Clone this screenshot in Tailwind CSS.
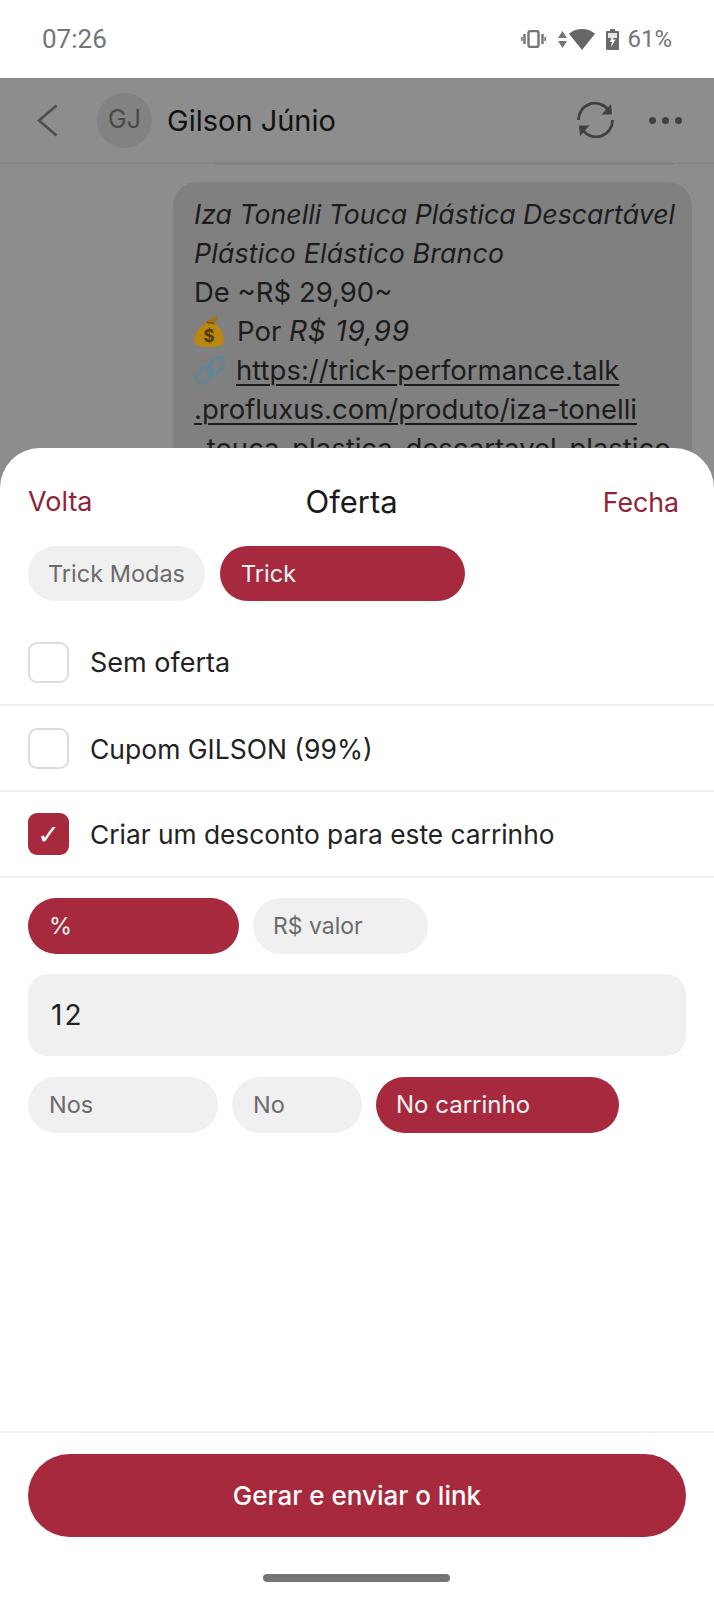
<!DOCTYPE html>
<html lang="en">
<head>
  <meta charset="UTF-8" />
  <meta name="viewport" content="width=device-width, initial-scale=1.0"/>
  <title>Oferta</title>
  <script src="https://cdn.jsdelivr.net/npm/@tailwindcss/browser@4"></script>
</head>
<body class="bg-white [font-family:Inter,sans-serif]">
  <div class="relative w-[714px] h-[1599px] overflow-hidden flex flex-col">

    <!-- Status bar -->
    <div class="h-[78px] shrink-0 bg-white flex items-start justify-between pl-[42px] pr-[42px] pt-[24px] text-[#757575] text-[24px] leading-[30px] [font-family:Roboto,sans-serif]">
      <span class="text-[26px]">07:26</span>
      <div class="flex items-center h-[30px]">
        <svg class="w-[25px] h-[18px] mr-[12px]" viewBox="0 0 25 18" fill="none" stroke="#757575">
          <rect x="7.5" y="1" width="10" height="16" rx="2" stroke-width="2.4"/>
          <path d="M3.5 4v10M21.5 4v10" stroke-width="2.4"/>
          <path d="M.8 7v4M24.2 7v4" stroke-width="1.6"/>
        </svg>
        <svg class="w-[9px] h-[17px] mr-[2px]" viewBox="0 0 9 17" fill="#757575">
          <path d="M4.5 0L9 7H0zM0 10h9l-4.500 7z"/>
        </svg>
        <svg class="w-[26px] h-[21px] mr-[11px]" viewBox="0 0 26 21" fill="#666666">
          <path d="M13 0C8 0 3.500 1.800 0 4.800L13 21 26 4.800C22.500 1.800 18 0 13 0z"/>
        </svg>
        <svg class="w-[13px] h-[21px] mr-[8px]" viewBox="0 0 13 21">
          <path d="M4 0h5v2h3a1 1 0 0 1 1 1v17a1 1 0 0 1-1 1H1a1 1 0 0 1-1-1V3a1 1 0 0 1 1-1h3z" fill="#6b6b6b"/>
          <path d="M2 4h9v15H2z" fill="#e4e4e4"/>
          <path d="M2 9h9v10H2z" fill="#6b6b6b"/>
          <path d="M7.500 6L3.500 13h2.500L5 18l4.500-7.500H7z" fill="#ffffff"/>
        </svg>
        <span>61%</span>
      </div>
    </div>

    <!-- Chat behind the sheet, dimmed -->
    <div class="flex-1 bg-[#8d8d8d] flex flex-col">
      <div class="relative h-[86px] shrink-0 border-b-2 border-[#858585] flex items-center pl-[37px] pr-[32px]">
        <svg class="w-[21px] h-[33px] mr-[39px]" viewBox="0 0 21 33" fill="none" stroke="#4d4d4d" stroke-width="2.600">
          <path d="M19.500 1.500L2 16.500l17.500 15"/>
        </svg>
        <div class="w-[55px] h-[55px] rounded-full bg-[#828282] flex items-center justify-center text-[#4a4a4a] text-[25px] mr-[15px]">GJ</div>
        <span class="text-[29px] leading-[34px] text-[#111111] mt-[2px]">Gilson Júnio</span>
        <svg class="w-[37px] h-[36px] ml-auto mr-[35px]" viewBox="0 0 37 36" fill="none" stroke="#404040" stroke-width="2.800">
          <path d="M1.500 18A16.500 16.500 0 0 1 31 7.500"/>
          <path d="M35.500 18A16.500 16.500 0 0 1 6 28.500"/>
          <path d="M34 2l1 10.500H24.500z" fill="#404040" stroke="none"/>
          <path d="M3 34L2 23.500h10.500z" fill="#404040" stroke="none"/>
        </svg>
        <div class="flex gap-[6px]">
          <span class="w-[7px] h-[7px] rounded-full bg-[#404040]"></span>
          <span class="w-[7px] h-[7px] rounded-full bg-[#404040]"></span>
          <span class="w-[7px] h-[7px] rounded-full bg-[#404040]"></span>
        </div>
        <div class="absolute left-[215px] right-[40px] bottom-[-3px] h-[2px] bg-[#808080]"></div>
      </div>

      <div class="flex justify-end pr-[22px] pt-[18px]">
        <div class="w-[519px] bg-[#808080] rounded-[24px] pl-[21px] pr-[8px] pt-[13px] pb-[40px] text-[27.500px] leading-[39px] text-[#1c1c1c]">
          <p class="italic text-[26.700px]">Iza Tonelli Touca Plástica Descartável</p>
          <p class="italic text-[26.700px] tracking-[0.2px]">Plástico Elástico Branco</p>
          <p>De ~R$ 29,90~</p>
          <p class="flex items-center">
            <svg class="w-[30px] h-[31px] mr-[13px] shrink-0" viewBox="0 0 30 31">
              <path d="M19 7C27 11 30 18 30 24c0 5-4 7-15 7S0 29 0 24C0 17 6 10 13 7z" fill="#b98711"/>
              <path d="M13 7l-1-4 4 1 6-4 2 3-5 5z" fill="#a2760e"/>
              <path d="M13 6.500l7 1" stroke="#6f520c" stroke-width="1.500"/>
              <text x="15" y="26" text-anchor="middle" font-size="17" font-weight="700" fill="#4d3a09" font-family="Inter">$</text>
            </svg>
            <span>Por <span class="italic text-[28px] tracking-[0.8px]">R$ 19,99</span></span>
          </p>
          <p class="flex items-center">
            <svg class="w-[32px] h-[31px] mr-[10px] shrink-0" viewBox="0 0 32 31" fill="none" stroke="#5f8797" stroke-width="3">
              <rect x="-5.500" y="-9.500" width="11" height="19" rx="5.500" transform="translate(10 20) rotate(40)"/>
              <rect x="-5.500" y="-9.500" width="11" height="19" rx="5.500" transform="translate(22 11) rotate(40)"/>
            </svg>
            <span class="underline underline-offset-[4px] decoration-2">https://trick-performance.talk</span>
          </p>
          <p class="underline underline-offset-[4px] decoration-2">.profluxus.com/produto/iza-tonelli</p>
          <p class="underline underline-offset-[4px] decoration-2 whitespace-nowrap">-touca-plastica-descartavel-plastico</p>
        </div>
      </div>
    </div>

    <!-- Bottom sheet -->
    <div class="absolute left-0 right-0 top-[448px] bottom-0 bg-white rounded-t-[40px] flex flex-col">
      <div class="flex items-center justify-between pl-[28px] pr-[35px] pt-[33px] h-[74px] text-[27px] leading-[40px] text-[#8f2438]">
        <span>Volta</span>
        <span class="text-[31px] text-[#1a1a1a] ml-[8px]">Oferta</span>
        <span class="text-[26.700px]">Fecha</span>
      </div>

      <div class="flex gap-[15px] px-[28px] pt-[24px] text-[23.500px]">
        <div class="w-[177px] h-[55px] rounded-full bg-[#f0f0f0] text-[#6a6a6a] flex items-center pl-[20px] pt-[1px]">Trick Modas</div>
        <div class="w-[245px] h-[55px] rounded-full bg-[#a6293e] text-[#f5f5f5] flex items-center pl-[21px] pt-[1px]">Trick</div>
      </div>

      <div class="mt-[19px] text-[26.500px] text-[#222222]">
        <div class="h-[86px] border-b-2 border-[#f0f0f0] flex items-center pl-[28px] gap-[21px]">
          <span class="w-[41px] h-[41px] rounded-[9px] border-2 border-[#dddddd]"></span>
          <span class="mt-[3px] text-[27px]">Sem oferta</span>
        </div>
        <div class="h-[86px] border-b-2 border-[#f0f0f0] flex items-center pl-[28px] gap-[21px]">
          <span class="w-[41px] h-[41px] rounded-[9px] border-2 border-[#dddddd]"></span>
          <span class="mt-[3px]">Cupom GILSON (99%)</span>
        </div>
        <div class="h-[86px] border-b-2 border-[#f0f0f0] flex items-center pl-[28px] gap-[21px]">
          <span class="w-[41px] h-[42px] rounded-[9px] bg-[#a6293e] flex items-center justify-center text-white text-[27px] leading-none [font-family:'DejaVu_Sans',sans-serif]">✓</span>
          <span class="mt-[1px] text-[26.300px]">Criar um desconto para este carrinho</span>
        </div>
      </div>

      <div class="flex gap-[14px] px-[28px] pt-[20px] text-[23.500px]">
        <div class="w-[211px] h-[56px] rounded-full bg-[#a6293e] text-[#f5f5f5] flex items-center pl-[21px]">%</div>
        <div class="w-[175px] h-[56px] rounded-full bg-[#f0f0f0] text-[#6a6a6a] flex items-center pl-[20px] text-[23px]">R$ valor</div>
      </div>

      <div class="mx-[28px] mt-[20px] h-[82px] rounded-[20px] bg-[#f0f0f0] flex items-center pl-[23px] text-[28px] tracking-[2px] text-[#222222]">12</div>

      <div class="flex gap-[14px] px-[28px] pt-[21px] text-[23.500px]">
        <div class="w-[190px] h-[56px] rounded-full bg-[#f0f0f0] text-[#6a6a6a] flex items-center pl-[21px]">Nos</div>
        <div class="w-[130px] h-[56px] rounded-full bg-[#f0f0f0] text-[#6a6a6a] flex items-center pl-[21px]">No</div>
        <div class="w-[243px] h-[56px] rounded-full bg-[#a6293e] text-[#f5f5f5] flex items-center pl-[20px] text-[24px]">No carrinho</div>
      </div>

      <div class="mt-auto border-t-2 border-[#f0f0f0] px-[28px] pt-[21px]">
        <div class="h-[83px] rounded-full bg-[#a6293e] text-white text-[26px] font-medium flex items-center justify-center">Gerar e enviar o link</div>
        <div class="flex justify-center pt-[37px] pb-[17px] pr-[2px]">
          <div class="w-[187px] h-[8px] rounded-full bg-[#757575]"></div>
        </div>
      </div>
    </div>
  </div>
</body>
</html>
